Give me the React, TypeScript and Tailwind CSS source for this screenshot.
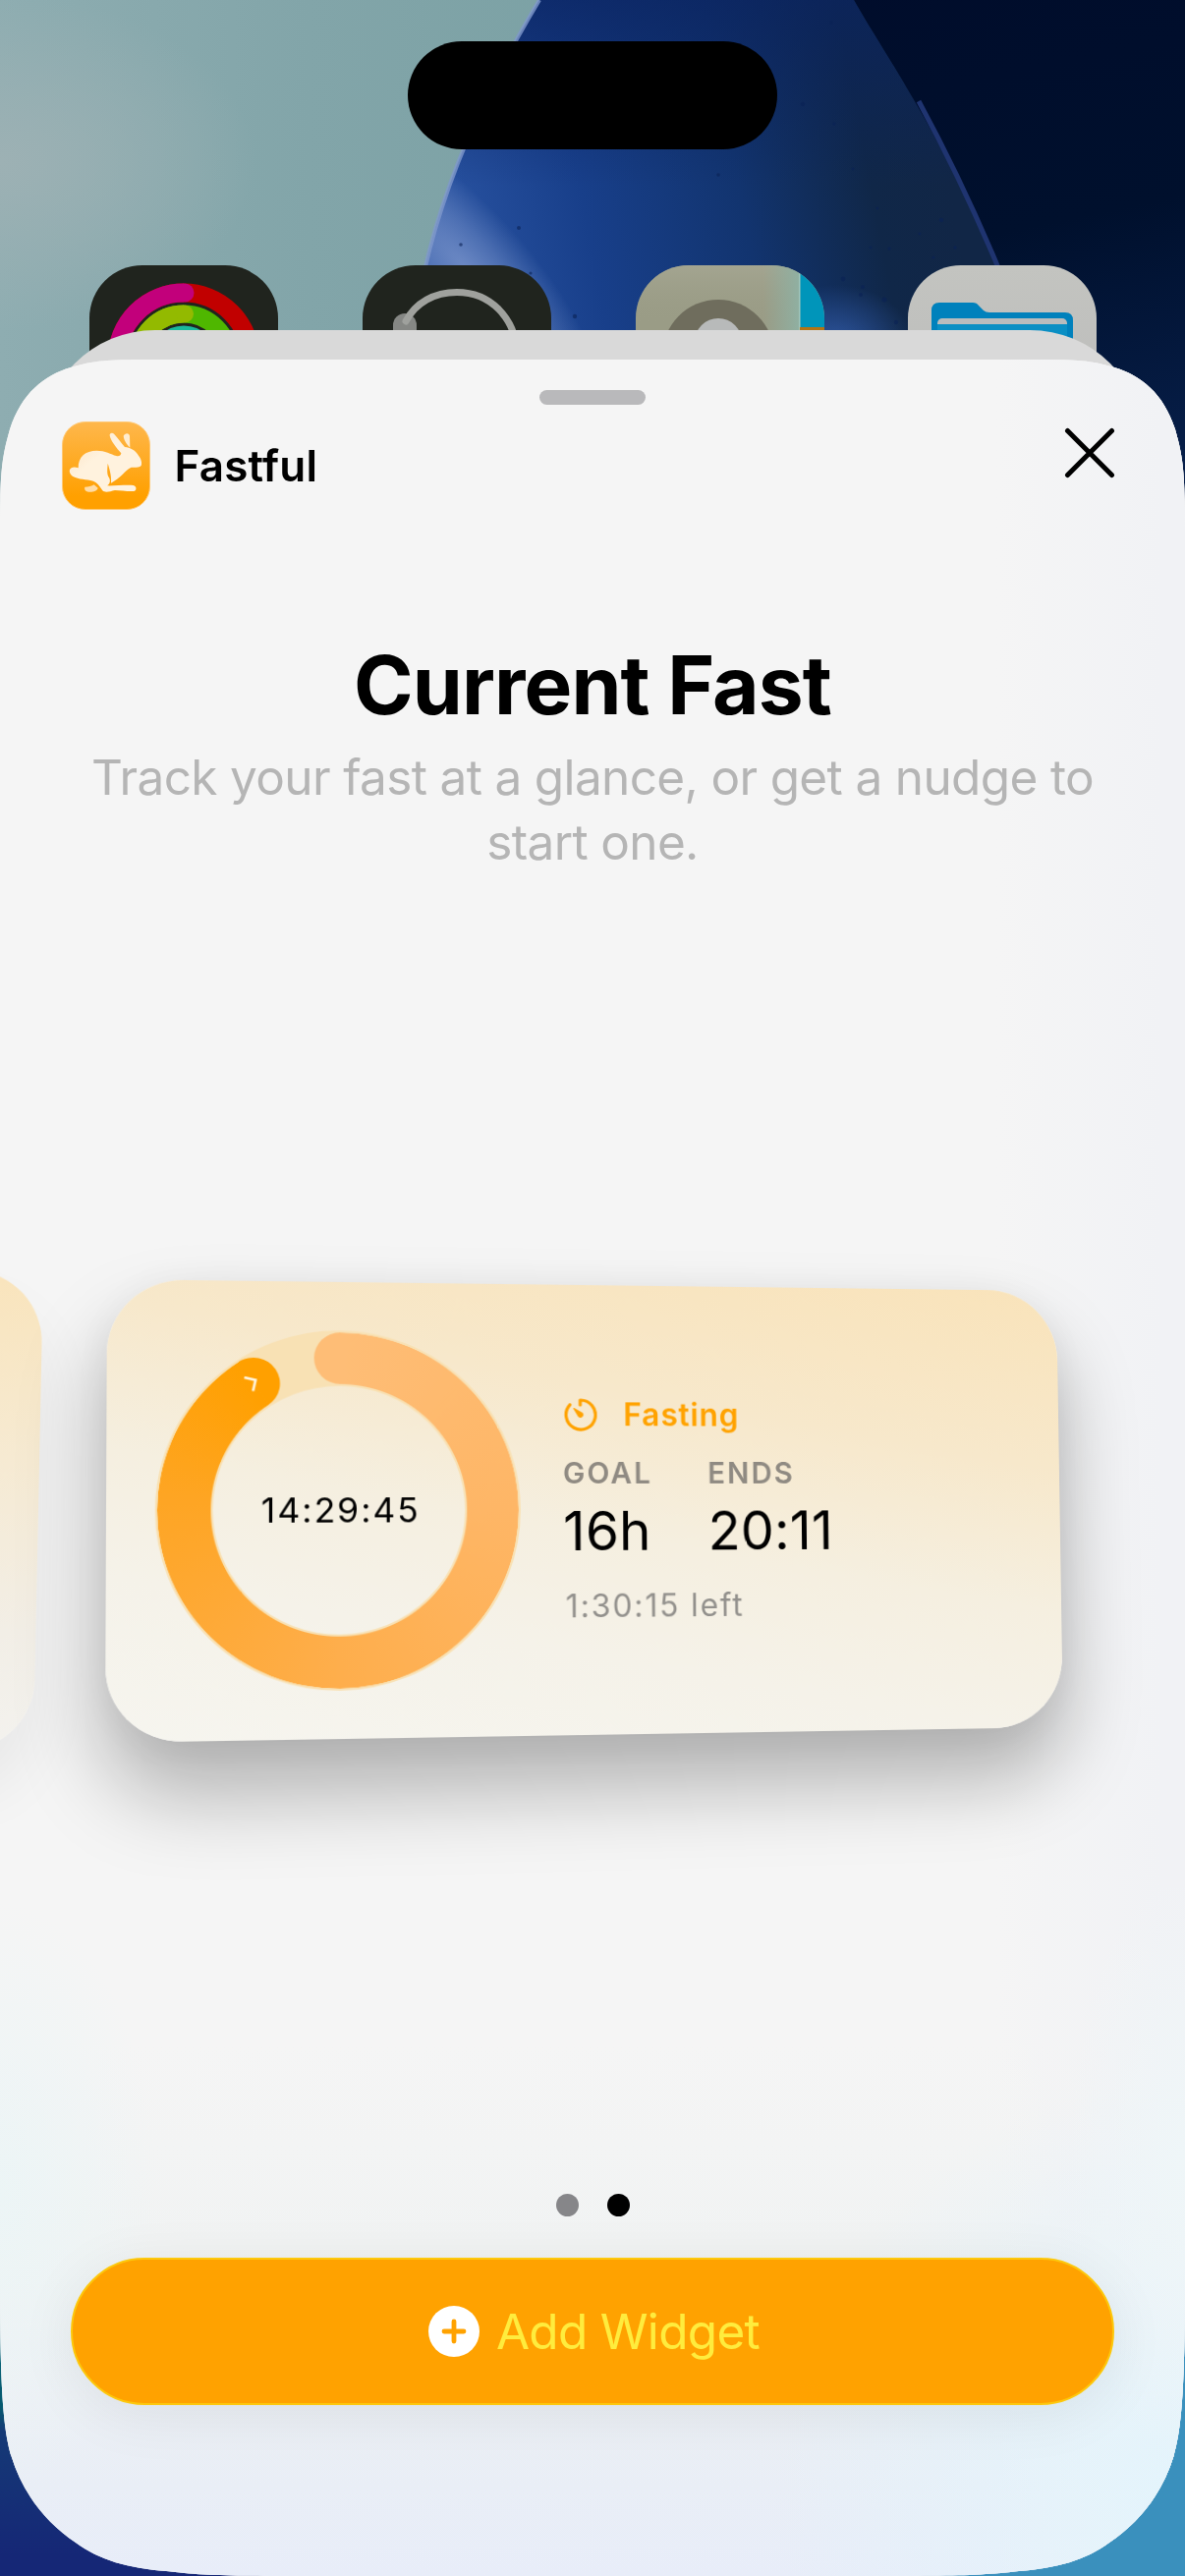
import type { CSSProperties, ReactNode } from "react";

type Point = [number, number];

/** Projects a w×h box onto the quad TL, TR, BR, BL (pixels relative to the box origin). */
function project(w: number, h: number, quad: [Point, Point, Point, Point]): CSSProperties {
  const [[x0, y0], [x1, y1], [x2, y2], [x3, y3]] = quad;
  const dx1 = x1 - x2;
  const dx2 = x3 - x2;
  const dy1 = y1 - y2;
  const dy2 = y3 - y2;
  const sx = x0 - x1 + x2 - x3;
  const sy = y0 - y1 + y2 - y3;
  const det = dx1 * dy2 - dx2 * dy1;
  const g = (sx * dy2 - dx2 * sy) / det;
  const k = (dx1 * sy - sx * dy1) / det;
  const a = (x1 - x0 + g * x1) / w;
  const b = (x3 - x0 + k * x3) / h;
  const d = (y1 - y0 + g * y1) / w;
  const e = (y3 - y0 + k * y3) / h;
  return {
    transformOrigin: "0 0",
    transform: `matrix3d(${[a, d, 0, g / w, b, e, 0, k / h, 0, 0, 1, 0, x0, y0, 0, 1].join(",")})`,
  };
}

const PETAL = "M549 0C510 65 450 175 427 300L425 420H1060L1017 275C955 130 900 55 869 0Z";

const DROPLETS: [number, number, number][] = [
  [846, 23, 2], [817, 106, 2.2], [849, 126, 1.8], [731, 178, 1.8], [868, 172, 1.4], [528, 232, 2],
  [469, 249, 1.8], [958, 224, 2.2], [905, 253, 1.8], [936, 238, 1.4], [893, 212, 1.4], [858, 284, 2.4],
  [878, 292, 2], [900, 305, 2.6], [585, 322, 2.2], [912, 328, 2.2], [876, 300, 2], [540, 278, 1.6],
  [972, 252, 1.8], [950, 262, 1.6], [886, 252, 1.4],
];

function Wallpaper() {
  return (
    <svg className="absolute inset-0" width="1206" height="2622" viewBox="0 0 1206 2622">
      <defs>
        <linearGradient id="sky" x1="0" y1="0" x2="1" y2="0">
          <stop offset="0" stopColor="#8eadb1" />
          <stop offset="0.45" stopColor="#82a5a9" />
          <stop offset="1" stopColor="#79a0a3" />
        </linearGradient>
        <radialGradient id="haze" gradientUnits="userSpaceOnUse" cx="0" cy="0" r="1" gradientTransform="translate(0 165) scale(260 170)">
          <stop offset="0" stopColor="#9db1b4" />
          <stop offset="1" stopColor="#9db1b4" stopOpacity="0" />
        </radialGradient>
        <linearGradient id="petal" gradientUnits="userSpaceOnUse" x1="440" y1="250" x2="960" y2="150">
          <stop offset="0" stopColor="#2a54a3" />
          <stop offset="0.3" stopColor="#183f8a" />
          <stop offset="0.6" stopColor="#12346f" />
          <stop offset="0.85" stopColor="#102748" />
          <stop offset="1" stopColor="#112646" />
        </linearGradient>
        <linearGradient id="petalTop" gradientUnits="userSpaceOnUse" x1="0" y1="0" x2="0" y2="190">
          <stop offset="0" stopColor="#0a2360" stopOpacity="0.7" />
          <stop offset="1" stopColor="#0a2360" stopOpacity="0" />
        </linearGradient>
        <radialGradient id="glow" gradientUnits="userSpaceOnUse" cx="0" cy="0" r="1" gradientTransform="translate(475 275) rotate(48) scale(190 62)">
          <stop offset="0" stopColor="#6c89c4" />
          <stop offset="0.5" stopColor="#6c89c4" stopOpacity="0.55" />
          <stop offset="1" stopColor="#6c89c4" stopOpacity="0" />
        </radialGradient>
        <radialGradient id="glow2" gradientUnits="userSpaceOnUse" cx="0" cy="0" r="1" gradientTransform="translate(850 350) scale(80 60)">
          <stop offset="0" stopColor="#3159a3" stopOpacity="0.9" />
          <stop offset="1" stopColor="#3159a3" stopOpacity="0" />
        </radialGradient>
        <linearGradient id="night" x1="0" y1="0" x2="0.2" y2="1">
          <stop offset="0" stopColor="#000c2b" />
          <stop offset="0.5" stopColor="#00102d" />
          <stop offset="1" stopColor="#08214e" />
        </linearGradient>
        <linearGradient id="leftEdge" gradientUnits="userSpaceOnUse" x1="0" y1="2300" x2="0" y2="2600">
          <stop offset="0" stopColor="#0a7384" />
          <stop offset="0.5" stopColor="#06596f" />
          <stop offset="0.58" stopColor="#153a76" />
          <stop offset="1" stopColor="#152776" />
        </linearGradient>
      </defs>
      <rect width="700" height="2300" fill="url(#sky)" />
      <rect width="400" height="400" fill="url(#haze)" />
      <rect x="600" width="606" height="620" fill="url(#night)" />
      <path d={PETAL} fill="url(#petal)" />
      <path d={PETAL} fill="url(#glow)" />
      <path d={PETAL} fill="url(#glow2)" />
      <path d={PETAL} fill="url(#petalTop)" />
      <path d="M549 0C510 65 450 175 427 300" fill="none" stroke="#7f99cc" strokeWidth="4" opacity="0.8" />
      <path d="M935 103C962 153 990 210 1017 275" fill="none" stroke="#1f3470" strokeWidth="5" />
      <g fill="#0a2255" opacity="0.6">
        {DROPLETS.map(([cx, cy, r]) => (
          <circle key={`${cx}-${cy}`} cx={cx} cy={cy} r={r} />
        ))}
      </g>
      <rect y="2300" width="603" height="322" fill="url(#leftEdge)" />
      <rect x="603" y="2300" width="603" height="322" fill="#3a90bd" />
    </svg>
  );
}

function AppTile({ className, children }: { className: string; children: ReactNode }) {
  return (
    <div className={`h-[192px] w-[192px] overflow-hidden rounded-[54px] ${className}`}>
      <svg width="192" height="192" viewBox="0 0 192 192">
        {children}
      </svg>
    </div>
  );
}

function HomeIcons() {
  return (
    <div className="flex gap-[85.8px] pl-[91px] pt-[270px]">
      <AppTile className="bg-[#20241e]">
        <circle cx="96" cy="96" r="68" fill="none" stroke="#c10000" strokeWidth="19" />
        <path d="M96 28A68 68 0 0 0 28 96" fill="none" stroke="#c2007b" strokeWidth="19" />
        <circle cx="97" cy="28" r="9.5" fill="#c2007b" />
        <circle cx="96" cy="96" r="46.5" fill="none" stroke="#4fb700" strokeWidth="18" />
        <path d="M96 49.5A46.5 46.5 0 0 0 49.5 96" fill="none" stroke="#93ba00" strokeWidth="18" />
        <circle cx="97" cy="49.5" r="9" fill="#93ba00" />
        <circle cx="96" cy="96" r="25" fill="none" stroke="#19b99c" strokeWidth="19" />
      </AppTile>
      <AppTile className="bg-[#20241e]">
        <rect x="31" y="49" width="24" height="50" rx="12" fill="#858784" />
        <path d="M44 57C54 38 73 27.5 96 27.5C130 27.5 155 53 158 90" fill="none" stroke="#9fa19d" strokeWidth="7" strokeLinecap="round" />
      </AppTile>
      <AppTile className="bg-[#9a9c86]">
        <defs>
          <linearGradient id="fade" x1="0" y1="0" x2="1" y2="0">
            <stop offset="0" stopColor="#8fae9f" stopOpacity="0" />
            <stop offset="1" stopColor="#8fb0a2" />
          </linearGradient>
          <linearGradient id="sheen" x1="0" y1="0" x2="0" y2="1">
            <stop offset="0" stopColor="#a6a793" stopOpacity="0.8" />
            <stop offset="1" stopColor="#9a9c86" stopOpacity="0" />
          </linearGradient>
        </defs>
        <rect width="167" height="60" fill="url(#sheen)" />
        <rect x="130" width="37" height="100" fill="url(#fade)" />
        <circle cx="84" cy="92" r="57" fill="#6f6d5d" />
        <circle cx="84" cy="78" r="24" fill="#b8baba" />
        <rect x="167" width="25" height="63" fill="#0095ba" />
        <rect x="166" width="1.5" height="80" fill="#a9c5b8" />
        <rect x="167" y="63" width="25" height="30" fill="#b27414" />
      </AppTile>
      <AppTile className="bg-gradient-to-b from-[#c3c4c0] to-[#bababa]">
        <path d="M24 90V46Q24 38 32 38H66Q70 38 72 41L77 46Q79 48 83 48H160Q168 48 168 56V90Z" fill="#0081bc" />
        <rect x="30" y="54" width="132" height="20" rx="5" fill="#b9bcbd" />
        <rect x="30" y="60" width="132" height="22" fill="#0a8fc4" />
      </AppTile>
    </div>
  );
}

function RabbitIcon() {
  return (
    <svg className="h-[90px] w-[90px]" viewBox="0 0 270 270">
      <defs>
        <linearGradient id="tile" x1="0" y1="0" x2="0" y2="1">
          <stop offset="0" stopColor="#feb74c" />
          <stop offset="0.85" stopColor="#ffa000" />
          <stop offset="1" stopColor="#ffa000" />
        </linearGradient>
        <linearGradient id="haunch" x1="0" y1="0" x2="1" y2="1">
          <stop offset="0" stopColor="#fbe0be" />
          <stop offset="0.4" stopColor="#fff2de" />
        </linearGradient>
      </defs>
      <rect x="1.5" y="1.5" width="267" height="267" rx="70" fill="url(#tile)" stroke="#ffc874" strokeWidth="3" />
      <path d="M70 200C80 200 92 198 98 193L110 203C108 211 98 215 86 215C74 215 67 209 70 200Z" fill="#ffdca6" />
      <path d="M188 44C192 34 206 34 207 44L208 80C199 70 190 60 188 44Z" fill="#ffeccf" />
      <path
        d="M50 142C49 108 72 89 106 89C132 89 150 100 166 105C174 107 180 104 181 97C168 83 148 58 146 43C145 35 154 33 160 39C170 50 181 66 192 78C208 80 224 87 234 104C243 115 245 128 242 135C236 141 222 140 212 140C202 144 194 153 185 162C174 173 163 180 150 188C152 168 146 146 140 128C139 144 136 160 144 172C150 182 145 193 138 196C156 197 198 193 218 195C229 197 229 212 219 213C200 214 178 210 162 210C146 214 132 219 124 211C114 196 108 187 96 182C74 176 52 178 34 168C22 161 20 147 29 142C37 137 43 141 50 142Z"
        fill="url(#haunch)"
      />
    </svg>
  );
}

const WIDGET_W = 972;
const WIDGET_H = 458;

function ProgressRing() {
  return (
    <div className="relative grid h-[361px] w-[361px] place-items-center">
      <svg className="absolute inset-0" width="361" height="361" viewBox="-180.5 -180.5 361 361">
        <circle r="152.5" fill="none" stroke="#f8e1b4" strokeWidth="56" />
      </svg>
      <div className="absolute inset-[2px] rounded-full bg-[conic-gradient(#febd76_0deg,#feb666_90deg,#feae4c_180deg,#fea523_275deg,#ffa000_326.3deg,transparent_326.3deg)] [mask-image:radial-gradient(circle,transparent_126px,black_127px,black_178px,transparent_179px)]" />
      <svg className="absolute inset-0" width="361" height="361" viewBox="-180.5 -180.5 361 361">
        <path d="M0.5 -178.5A26 26 0 0 0 0.5 -126.5Z" fill="#febd76" />
        <g transform="rotate(-33.7)">
          <path d="M-0.5 -178.5A26 26 0 0 1 -0.5 -126.5Z" fill="#ffa000" />
        </g>
        <path d="M-94 -132.5L-83 -130L-85.5 -119" fill="none" stroke="#fff7e4" strokeWidth="2.5" />
      </svg>
      <span className="relative left-[1px] top-[1px] text-[34.5px] leading-none tracking-[1.9px] text-black">14:29:45</span>
    </div>
  );
}

function TimerIcon() {
  return (
    <svg className="h-[34px] w-[34px]" viewBox="0 0 34 34" fill="none" stroke="#ffa200" strokeWidth="3.2" strokeLinecap="round" strokeLinejoin="round">
      <path d="M6.5 6.8A15 15 0 1 0 17 2V7" />
      <path d="M10.5 10.5L18.8 15.2A2.2 2.2 0 0 1 15.4 18.6Z" fill="#ffa200" strokeWidth="1.2" />
    </svg>
  );
}

function Stat({ label, value }: { label: string; value: string }) {
  return (
    <div className="flex w-[148.5px] flex-col">
      <span className="text-[30px] leading-[36px] font-semibold tracking-[2.1px] text-[#8f8a82]">{label}</span>
      <span className="mt-[10px] text-[55px] leading-[62px] tracking-[0.3px] text-black">{value}</span>
    </div>
  );
}

function CurrentFastWidget() {
  return (
    <div
      className="absolute left-[107px] top-[937px] flex h-[458px] w-[972px] items-center gap-[43px] rounded-[74px] bg-[linear-gradient(190deg,#f9e3ba_0%,#f7e8cb_30%,#f5efe0_54%,#f5f2e9_74%,#f6f5ef_100%)] pl-[47px] shadow-[0_50px_80px_4px_rgba(0,0,0,0.27),0_4px_50px_rgba(0,0,0,0.05)]"
      style={project(WIDGET_W, WIDGET_H, [[2, -1], [968, 11], [975, 455], [0, 471]])}
    >
      <ProgressRing />
      <div className="flex flex-col pt-[3px]">
        <div className="flex items-center gap-[27px] pl-[1px] text-[#ffa200]">
          <TimerIcon />
          <span className="text-[32px] leading-[40px] font-semibold tracking-[0.9px]">Fasting</span>
        </div>
        <div className="mt-[21px] flex">
          <Stat label="GOAL" value="16h" />
          <Stat label="ENDS" value="20:11" />
        </div>
        <span className="mt-[26px] pl-[2px] text-[32px] leading-[40px] tracking-[1.9px] text-[#92908c]">1:30:15 left</span>
      </div>
    </div>
  );
}

function PreviousWidget() {
  return (
    <div
      className="absolute left-0 top-[917px] h-[500px] w-[300px] rounded-[72px] bg-[linear-gradient(180deg,#f9e4bc_0%,#f6ead2_38%,#f2eee6_75%,#f3f2ee_100%)] shadow-[0_44px_70px_rgba(0,0,0,0.06)]"
      style={project(300, 500, [[-260, 2], [44, 13], [34, 495], [-260, 511]])}
    />
  );
}

/** Cool tints that pool along the sheet's lower corners. */
function SheetTint() {
  return (
    <div className="absolute inset-x-0 bottom-0 h-[700px] bg-[radial-gradient(ellipse_160px_300px_at_0%_45%,#ecf5f6_0%,#ecf5f600_100%),radial-gradient(ellipse_120px_300px_at_100%_40%,#eff6f8_0%,#eff6f800_100%),radial-gradient(ellipse_420px_420px_at_100%_88%,#e3f4fc_0%,#e3f4fc00_100%)]" />
  );
}

export default function App() {
  return (
    <main className="relative h-[2622px] w-[1206px] overflow-hidden bg-[#0b2c5c] font-['Inter',sans-serif] text-black">
      <Wallpaper />
      <div className="relative">
        <HomeIcons />
      </div>
      <div className="absolute left-[415px] top-[42px] h-[110px] w-[376px] rounded-full bg-black" />
      <div className="absolute inset-x-[42px] top-[336px] h-[400px] rounded-t-[116px] bg-[#d9d9d9]" />

      <section className="absolute inset-x-0 bottom-0 top-[366px] overflow-hidden bg-[#f5f5f5] bg-[linear-gradient(90deg,#f5f5f500_0%,#f5f5f500_84%,#f1f2f5_98%),linear-gradient(180deg,#f5f5f5_0%,#f5f5f5_76%,#f1f3f3_85%,#e9eef6_96%,#e8edf9_100%)] [clip-path:path('M0_174C0_114_2_99_10_71C22_34_45_16_72_8C95_1_110_0_150_0H1056C1096_0_1111_1_1134_8C1161_16_1184_34_1196_71C1204_99_1206_114_1206_174V1950C1206_2060_1203_2105_1194.5_2134C1183_2172_1159_2202_1129_2222C1105_2240_1075_2248_1037_2251C1006_2255_976_2256_916_2256H290C230_2256_200_2255_169_2251C131_2248_101_2240_77_2222C47_2202_23_2172_11.5_2134C3_2105_0_2060_0_1950Z')]">
        <SheetTint />
        <PreviousWidget />
        <CurrentFastWidget />
        <div className="relative flex h-full flex-col items-center">
          <div className="mt-[31px] h-[15px] w-[108px] shrink-0 rounded-full bg-[#b9b9bb]" />
          <header className="mt-[17px] flex w-full shrink-0 items-start justify-between pl-[63px] pr-[71px]">
            <div className="flex items-center gap-[24.5px]">
              <RabbitIcon />
              <h2 className="text-[44px] leading-[54px] font-semibold tracking-[0.2px]">Fastful</h2>
            </div>
            <svg className="mt-[6px] h-[52px] w-[52px]" viewBox="0 0 52 52" stroke="black" strokeWidth="5" strokeLinecap="round">
              <path d="M3.5 3.5L48.5 48.5M48.5 3.5L3.5 48.5" />
            </svg>
          </header>
          <h1 className="mt-[130px] text-[82px] leading-[98px] font-bold tracking-[-0.9px]">Current Fast</h1>
          <p className="mt-[11px] w-[1080px] text-center text-[49.5px] leading-[66px] tracking-[-0.65px] text-[#b5b5b5]">
            Track your fast at a glance, or get a nudge to start one.
          </p>
          <div className="mt-auto flex gap-[29px]">
            <span className="h-[23px] w-[23px] rounded-full bg-[#868689]" />
            <span className="h-[23px] w-[23px] rounded-full bg-black" />
          </div>
          <button className="mb-[174px] mt-[42px] flex h-[150px] w-[1062px] shrink-0 items-center justify-center gap-[17px] rounded-full border-2 border-[#fdc80c] bg-[#ffa200] pl-[3px] shadow-[0_10px_60px_rgba(0,0,0,0.07)]">
            <svg className="h-[52px] w-[52px]" viewBox="0 0 52 52">
              <circle cx="26" cy="26" r="26" fill="white" />
              <path d="M26 16V36M16 26H36" stroke="#ffa200" strokeWidth="4.8" strokeLinecap="round" />
            </svg>
            <span className="text-[49.5px] leading-[60px] tracking-[-0.7px] text-[#ffec3d]">Add Widget</span>
          </button>
        </div>
      </section>
    </main>
  );
}
